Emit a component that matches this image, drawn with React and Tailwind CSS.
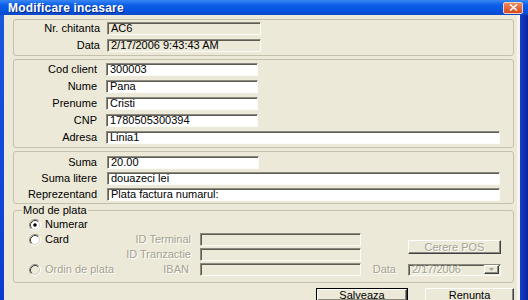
import clsx from 'clsx';

const sunken =
  'border border-t-[#8c8a7e] border-l-[#8c8a7e] border-b-[#fbfbf8] border-r-[#fbfbf8] shadow-[inset_1px_1px_0_#5e5c52]';
const raised =
  'border border-t-white border-l-white border-r-[#404040] border-b-[#404040] shadow-[inset_-1px_-1px_0_#8c8a7e]';
const dim = 'text-[#a5a292] [text-shadow:1px_1px_0_#ffffff]';

function Field({ value, w, white = true, className }) {
  return (
    <div
      className={clsx(
        'h-[13px] pl-[3px] leading-[11px] whitespace-nowrap overflow-hidden',
        sunken,
        white ? 'bg-white' : 'bg-[#ece9d8]',
        w,
        className
      )}
    >
      {value}
    </div>
  );
}

function Row({ label, labelW, gap, children }) {
  return (
    <div className="flex items-center h-[13px]">
      <div className={clsx('text-right whitespace-nowrap leading-[13px]', labelW)}>{label}</div>
      <div className={gap}>{children}</div>
    </div>
  );
}

function Radio({ checked, disabled }) {
  return (
    <svg width="12" height="12" viewBox="0 0 12 12" className="shrink-0">
      <circle cx="6" cy="6" r="5" fill={disabled ? '#ece9d8' : '#ffffff'} />
      <path d="M2.11 9.89 A5.5 5.5 0 0 1 9.89 2.11" stroke="#8c8a7e" fill="none" />
      <path d="M9.89 2.11 A5.5 5.5 0 0 1 2.11 9.89" stroke="#ffffff" fill="none" />
      <path d="M2.82 9.18 A4.5 4.5 0 0 1 9.18 2.82" stroke="#404040" fill="none" />
      <path d="M9.18 2.82 A4.5 4.5 0 0 1 2.82 9.18" stroke="#d4d0c8" fill="none" />
      {checked && <circle cx="6" cy="6" r="1.8" fill="#000000" />}
    </svg>
  );
}

export default function App() {
  return (
    <div className="w-[528px] h-[300px] overflow-hidden flex flex-col bg-[#ece9d8] font-['Liberation_Sans',Arial,sans-serif] text-[11px] text-black">
      {/* Title bar */}
      <div className="h-[15px] shrink-0 flex items-center pl-[8px] pr-[5px] bg-[linear-gradient(to_bottom,#3a86f4_0%,#0a5ee8_35%,#0552df_75%,#0a48c8_100%)]">
        <span className="text-white font-bold text-[12px] leading-none tracking-[0.2px] [text-shadow:1px_1px_0_#0a2a80]">
          Modificare incasare
        </span>
        <div className="ml-auto w-[20px] h-[12px] rounded-[2px] border border-[#f4d0c0] bg-[linear-gradient(to_bottom,#ee8a60,#d8481c)] flex items-center justify-center">
          <svg width="9" height="7" viewBox="0 0 9 7">
            <path d="M1 0.5 L8 6.5 M8 0.5 L1 6.5" stroke="#ffffff" strokeWidth="1.6" />
          </svg>
        </div>
      </div>

      <div className="flex-1 flex">
        <div className="w-[4px] bg-[linear-gradient(to_bottom,#1a56e0,#0a3cd0)]" />

        <div className="flex-1 flex flex-col pl-[9px] pr-[3px] pt-[4px]">
          {/* Chitanta */}
          <div className="border border-[#c3c0ac] rounded-[3px] pt-[2px] pb-[3px] flex flex-col gap-[4px]">
            <Row label="Nr. chitanta" labelW="w-[86px]" gap="ml-[7px]">
              <Field value="AC6" w="w-[154px]" white={false} />
            </Row>
            <Row label="Data" labelW="w-[86px]" gap="ml-[7px]">
              <Field value="2/17/2006 9:43:43 AM" w="w-[154px]" white={false} />
            </Row>
          </div>

          {/* Client */}
          <div className="mt-[3px] border border-[#c3c0ac] rounded-[3px] pt-[3px] pb-[3px] flex flex-col gap-[4px]">
            <Row label="Cod client" labelW="w-[83px]" gap="ml-[9px]">
              <Field value="300003" w="w-[152px]" />
            </Row>
            <Row label="Nume" labelW="w-[83px]" gap="ml-[9px]">
              <Field value="Pana" w="w-[152px]" />
            </Row>
            <Row label="Prenume" labelW="w-[83px]" gap="ml-[9px]">
              <Field value="Cristi" w="w-[152px]" />
            </Row>
            <Row label="CNP" labelW="w-[83px]" gap="ml-[9px]">
              <Field value="1780505300394" w="w-[152px]" />
            </Row>
            <Row label="Adresa" labelW="w-[83px]" gap="ml-[9px]">
              <Field value="Linia1" w="w-[394px]" />
            </Row>
          </div>

          {/* Suma */}
          <div className="mt-[3px] border border-[#c3c0ac] rounded-[3px] pt-[4px] pb-[2px] flex flex-col gap-[3px]">
            <Row label="Suma" labelW="w-[83px]" gap="ml-[10px]">
              <Field value="20.00" w="w-[152px]" />
            </Row>
            <Row label="Suma litere" labelW="w-[83px]" gap="ml-[10px]">
              <Field value="douazeci lei" w="w-[393px]" />
            </Row>
            <Row label="Reprezentand" labelW="w-[83px]" gap="ml-[10px]">
              <Field value="Plata factura numarul:" w="w-[393px]" />
            </Row>
          </div>

          {/* Mod de plata */}
          <fieldset className="border border-[#c3c0ac] rounded-[3px] pl-[8px] pb-[5px]">
            <legend className="px-[1px] leading-[13px]">Mod de plata</legend>
            <div className="ml-[5px] grid grid-cols-[98px_68px_168px_47px_93px] grid-rows-[15px_15px_15px_15px] items-center">
              <div className="col-start-1 row-start-1 flex items-center pl-[2px] gap-[4px]">
                <Radio checked />
                <span>Numerar</span>
              </div>

              <div className="col-start-1 row-start-2 flex items-center pl-[2px] gap-[4px]">
                <Radio />
                <span>Card</span>
              </div>
              <div className={clsx('col-start-2 row-start-2 flex justify-end pr-[2px] whitespace-nowrap', dim)}>
                ID Terminal
              </div>
              <div className="col-start-3 row-start-2 pl-[7px]">
                <Field value="" w="w-[161px]" white={false} />
              </div>
              <div className="col-start-5 row-start-2 row-span-2 self-center">
                <div className={clsx('h-[14px] w-[93px] bg-[#ece9d8] flex items-center justify-center leading-none', raised, dim)}>
                  Cerere POS
                </div>
              </div>

              <div className={clsx('col-start-2 row-start-3 flex justify-end pr-[2px] whitespace-nowrap', dim)}>
                ID Tranzactie
              </div>
              <div className="col-start-3 row-start-3 pl-[7px]">
                <Field value="" w="w-[161px]" white={false} />
              </div>

              <div className="col-start-1 row-start-4 flex items-center pl-[2px] gap-[4px]">
                <Radio disabled />
                <span className={dim}>Ordin de plata</span>
              </div>
              <div className={clsx('col-start-2 row-start-4 flex justify-end pr-[4px] whitespace-nowrap', dim)}>
                IBAN
              </div>
              <div className="col-start-3 row-start-4 pl-[7px]">
                <Field value="" w="w-[161px]" white={false} />
              </div>
              <div className={clsx('col-start-4 row-start-4 flex justify-end pr-[12px]', dim)}>Data</div>
              <div className="col-start-5 row-start-4">
                <div className={clsx('h-[12px] w-[93px] bg-[#ece9d8] flex items-center pl-[3px]', sunken)}>
                  <span className={clsx('flex-1 leading-none', dim)}>2/17/2006</span>
                  <div className={clsx('w-[15px] h-[9px] mr-[1px] bg-[#ece9d8] flex items-center justify-center', raised)}>
                    <svg width="5" height="3" viewBox="0 0 5 3">
                      <path d="M0 0 H5 L2.5 3 Z" fill="#a5a292" />
                    </svg>
                  </div>
                </div>
              </div>
            </div>
          </fieldset>

          {/* Buttons */}
          <div className="mt-[5px] flex justify-end gap-[17px]">
            <div className="h-[14px] w-[92px] border border-black bg-[#ece9d8]">
              <div className={clsx('w-full h-full flex items-center justify-center leading-none', raised)}>Salveaza</div>
            </div>
            <div className={clsx('h-[14px] w-[89px] bg-[#ece9d8] flex items-center justify-center leading-none', raised)}>
              Renunta
            </div>
          </div>
        </div>

        <div className="w-[3px] bg-[#f6f5ee]" />
        <div className="w-[8px] bg-[linear-gradient(to_right,#1440c8,#0a249c)]" />
      </div>
    </div>
  );
}
